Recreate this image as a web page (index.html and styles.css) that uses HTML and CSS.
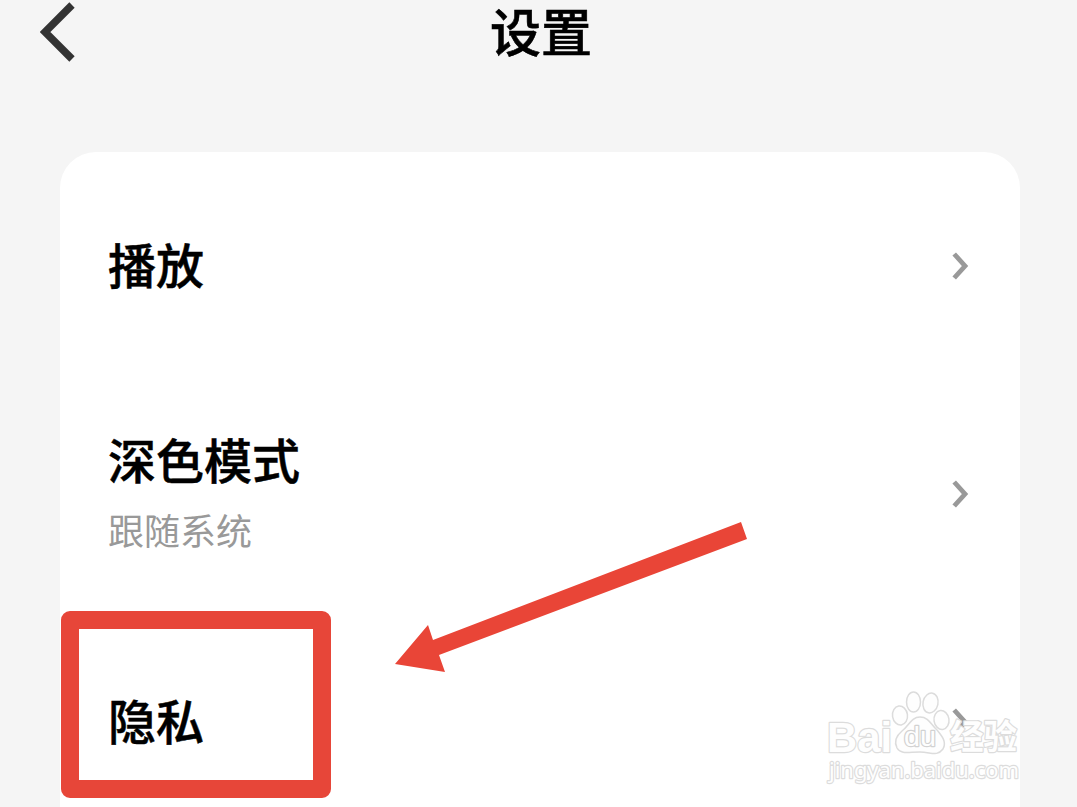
FILE: index.html
```html
<!DOCTYPE html>
<html lang="zh-CN">
<head>
    <meta charset="UTF-8">
    <meta name="viewport" content="width=device-width, initial-scale=1.0">
    <title>设置</title>
    <link rel="stylesheet" href="styles.css">
</head>
<body>
    <!-- Header -->
    <header class="header">
        <svg class="back-icon" viewBox="0 0 36 62" aria-label="返回">
            <path d="M32 5 L5 32 L32 59" />
        </svg>
        <h1 class="title">设置</h1>
    </header>

    <!-- Settings List -->
    <main class="card">
        <div class="row">
            <div class="row-text">
                <div class="row-title">播放</div>
            </div>
            <svg class="chevron" viewBox="0 0 18 28"><path d="M2.2 2 L13 14 L2.2 26" /></svg>
        </div>
        <div class="row">
            <div class="row-text">
                <div class="row-title">深色模式</div>
                <div class="row-subtitle">跟随系统</div>
            </div>
            <svg class="chevron" viewBox="0 0 18 28"><path d="M2.2 2 L13 14 L2.2 26" /></svg>
        </div>
        <div class="row">
            <div class="row-text">
                <div class="row-title">隐私</div>
            </div>
            <svg class="chevron" viewBox="0 0 18 28"><path d="M2.2 2 L13 14 L2.2 26" /></svg>
        </div>
    </main>

    <!-- Highlight and arrow -->
    <div class="highlight"></div>
    <svg class="arrow" viewBox="0 0 354 152">
        <polygon points="0,143 33,104 38,119 346,1 352,18 44,134 50,151" />
    </svg>

    <!-- Watermark -->
    <svg class="watermark" viewBox="0 0 206 106">
        <text class="mark-latin" x="2" y="68" textLength="65" lengthAdjust="spacingAndGlyphs">Bai</text>
        <g class="paw">
            <ellipse cx="75" cy="31.5" rx="7.5" ry="9.5" transform="rotate(-8 75 31.5)" />
            <ellipse cx="88.5" cy="18" rx="7" ry="10" />
            <ellipse cx="105.5" cy="19" rx="7.5" ry="10" transform="rotate(12 105.5 19)" />
            <ellipse cx="116.5" cy="36" rx="7.5" ry="9.5" transform="rotate(-8 116.5 36)" />
            <path d="M95 33 C86 33 84 42 77 47 C71 52 69 58 72 64 C76 71 84 68 95 68 C106 68 112 73 118 65 C122 58 117 52 112 46 C106 41 104 33 95 33 Z" />
        </g>
        <text class="mark-du" x="79" y="62" textLength="32" lengthAdjust="spacingAndGlyphs">du</text>
        <text class="mark-cjk" x="125" y="65" textLength="67" lengthAdjust="spacingAndGlyphs">经验</text>
        <text class="mark-url" x="4" y="94" textLength="190" lengthAdjust="spacingAndGlyphs">jingyan.baidu.com</text>
    </svg>
</body>
</html>
```
FILE: styles.css
```css
/* General Styles */
* {
    box-sizing: border-box;
}

body {
    position: relative;
    margin: 0;
    width: 1077px;
    height: 807px;
    overflow: hidden;
    background-color: #f5f5f5;
    font-family: "Noto Sans CJK SC", sans-serif;
    color: #000;
}

/* Header */
.header {
    display: grid;
    grid-template-columns: 1fr auto 1fr;
    align-items: start;
    height: 66px;
    padding: 0 35px 0 40px;
}

.back-icon {
    width: 36px;
    height: 62px;
    fill: none;
    stroke: #333;
    stroke-width: 7.5;
}

.title {
    margin: 0;
    font-size: 51px;
    font-weight: 500;
    line-height: 61px;
    -webkit-text-stroke: 0.6px #000;
}

/* Settings List */
.card {
    width: 960px;
    margin: 86px 0 0 60px;
    background-color: #fff;
    border-radius: 36px 36px 0 0;
}

.row {
    display: flex;
    justify-content: space-between;
    align-items: center;
    height: 228px;
    padding: 0 50px 0 48px;
}

.row-text {
    padding-bottom: 6px;
}

.row-title {
    font-size: 48px;
    font-weight: 500;
    line-height: 76px;
    -webkit-text-stroke: 0.5px #000;
}

.row-subtitle {
    font-size: 36px;
    line-height: 66px;
    color: #999;
}

.chevron {
    width: 18px;
    height: 28px;
    fill: none;
    stroke: #999;
    stroke-width: 4.8;
}

/* Highlight and arrow */
.highlight {
    position: absolute;
    left: 61px;
    top: 611px;
    width: 270px;
    height: 187px;
    border: 18px solid #e74639;
    border-radius: 9px;
}

.arrow {
    position: absolute;
    left: 395px;
    top: 521px;
    width: 354px;
    height: 152px;
    fill: #e94537;
}

/* Watermark */
.watermark {
    position: absolute;
    left: 825px;
    top: 684px;
    width: 206px;
    height: 106px;
    fill: #fefefe;
    stroke: #dcdcdc;
    stroke-width: 2.4;
    stroke-linejoin: round;
    paint-order: stroke;
}

.paw {
    stroke-width: 1.5;
    paint-order: normal;
}

.mark-latin,
.mark-du {
    font-family: "Liberation Sans", sans-serif;
    font-weight: 700;
}

.mark-latin {
    font-size: 43px;
}

.mark-du {
    font-size: 27px;
    font-weight: 400;
    stroke: #d2d2d2;
}

.mark-cjk {
    font-size: 34px;
    font-weight: 700;
}

.mark-url {
    font-family: "Noto Sans", sans-serif;
    font-size: 22px;
}
```
